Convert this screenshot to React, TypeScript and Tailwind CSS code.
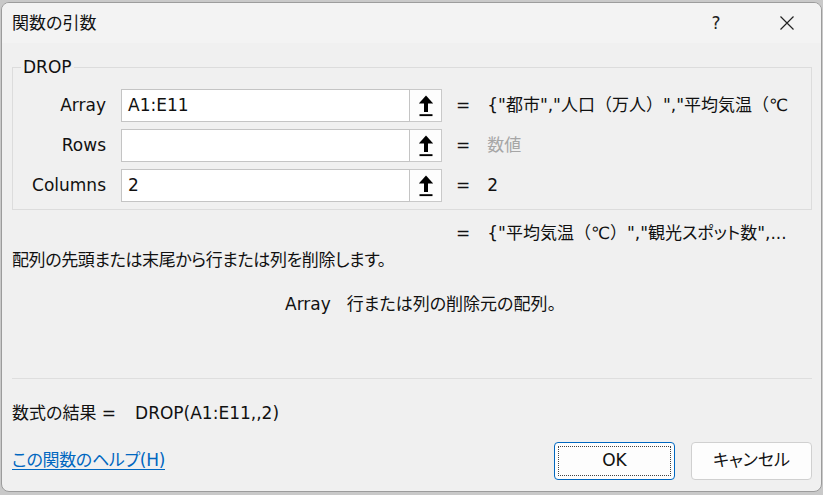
import React from "react";

const font = "font-['DejaVu_Sans','Noto_Sans_CJK_JP',sans-serif] [font-feature-settings:'palt']";

function FW({ text }: { text: string }) {
  const parts = text.split(/([（）])/);
  return (
    <>
      {parts.map((p, i) =>
        p === "（" || p === "）" ? (
          <span key={i} className="[font-feature-settings:normal]">
            {p}
          </span>
        ) : (
          <span key={i}>{p}</span>
        )
      )}
    </>
  );
}

function RefIcon() {
  return (
    <svg width="16" height="22" viewBox="0 0 16 22" className="block">
      <polygon points="8,0.5 0.8,8.5 15.2,8.5" fill="#000" />
      <rect x="6" y="8" width="4" height="9" fill="#000" />
      <rect x="1.5" y="19.2" width="13" height="1.9" fill="#000" />
    </svg>
  );
}

function ArgRow({ label, value, result, muted }: { label: string; value: string; result: string; muted?: boolean }) {
  return (
    <div className="flex items-center h-[33px]">
      <div className="w-[93px] text-right">{label}</div>
      <div className="ml-[15px] flex">
        <div className="w-[289px] h-[33px] bg-white border border-[#c4c4c4] pl-[6px] flex items-center leading-none">
          {value}
        </div>
        <div className="w-[32px] h-[33px] bg-[#fdfdfd] border border-[#c9c9c9] border-l-0 flex items-center justify-center pt-[1px]">
          <RefIcon />
        </div>
      </div>
      <div className="ml-[14px]">=</div>
      <div className={"ml-[17px] whitespace-nowrap " + (muted ? "text-[#a6a6a6]" : "")}>
        <FW text={result} />
      </div>
    </div>
  );
}

export default function App() {
  return (
    <div className={"w-[823px] h-[495px] bg-[#c9c9c9] pt-[2px] pl-[1px] text-[17px] text-[#111] " + font}>
      <div className="w-[821px] h-[490px] rounded-[8px] border border-[#9c9c9c] bg-[#f0f0f0] overflow-hidden flex flex-col">
        {/* title bar */}
        <div className="h-[40px] bg-[#f3f3f3] flex items-center pl-[10px] shrink-0">
          <div className="leading-none">関数の引数</div>
          <div className="ml-auto w-[20px] text-center mr-[53px] text-[#222] leading-none">?</div>
          <svg width="16" height="16" viewBox="0 0 16 16" className="mr-[26px]">
            <path d="M1.5 1.5 L14.5 14.5 M14.5 1.5 L1.5 14.5" stroke="#222" strokeWidth="1.2" fill="none" />
          </svg>
        </div>

        {/* group box */}
        <fieldset className="mt-[14px] ml-[10px] w-[800px] border border-[#dcdcdc] pb-[7px]">
          <legend className="ml-[8px] px-[2px] leading-[20px]">DROP</legend>
          <div className="mt-[12px] flex flex-col gap-[7px]">
            <ArgRow label="Array" value="A1:E11" result={'{"都市","人口（万人）","平均気温（℃'} />
            <ArgRow label="Rows" value="" result="数値" muted />
            <ArgRow label="Columns" value="2" result="2" />
          </div>
        </fieldset>

        <div className="mt-[13px] h-[22px] flex items-center pl-[454px] whitespace-nowrap">
          <span>=</span>
          <span className="ml-[17px]">
            <FW text={'{"平均気温（℃）","観光スポット数",...'} />
          </span>
        </div>

        <div className="mt-[5px] h-[22px] flex items-center pl-[10px] whitespace-nowrap tracking-[-0.4px]">
          配列の先頭または末尾から行または列を削除します。
        </div>

        <div className="mt-[22px] h-[22px] flex items-center pl-[283px] whitespace-nowrap">
          <span>Array</span>
          <span className="ml-[16px]">行または列の削除元の配列。</span>
        </div>

        <div className="mt-[62px] ml-[10px] w-[800px] h-px bg-[#dedede]" />

        <div className="mt-[24px] h-[22px] flex items-center pl-[10px] whitespace-nowrap">
          <span>数式の結果 =</span>
          <span className="ml-[19px]">DROP(A1:E11,,2)</span>
        </div>

        <div className="mt-[17px] flex items-center pl-[10px]">
          <a className="text-[#0067c0] underline underline-offset-[3px] decoration-1 whitespace-nowrap tracking-[-0.3px]">この関数のヘルプ(H)</a>
          <button className="ml-auto w-[121px] h-[38px] rounded-[4px] border border-[#0067c0] bg-[#fdfdfd] p-[3px]">
            <div className="w-full h-full border border-dotted border-[#444] flex items-center justify-center">OK</div>
          </button>
          <button className="ml-[16px] mr-[9px] w-[121px] h-[38px] rounded-[4px] border border-[#d0d0d0] bg-[#fdfdfd] flex items-center justify-center">
            キャンセル
          </button>
        </div>
      </div>
    </div>
  );
}
